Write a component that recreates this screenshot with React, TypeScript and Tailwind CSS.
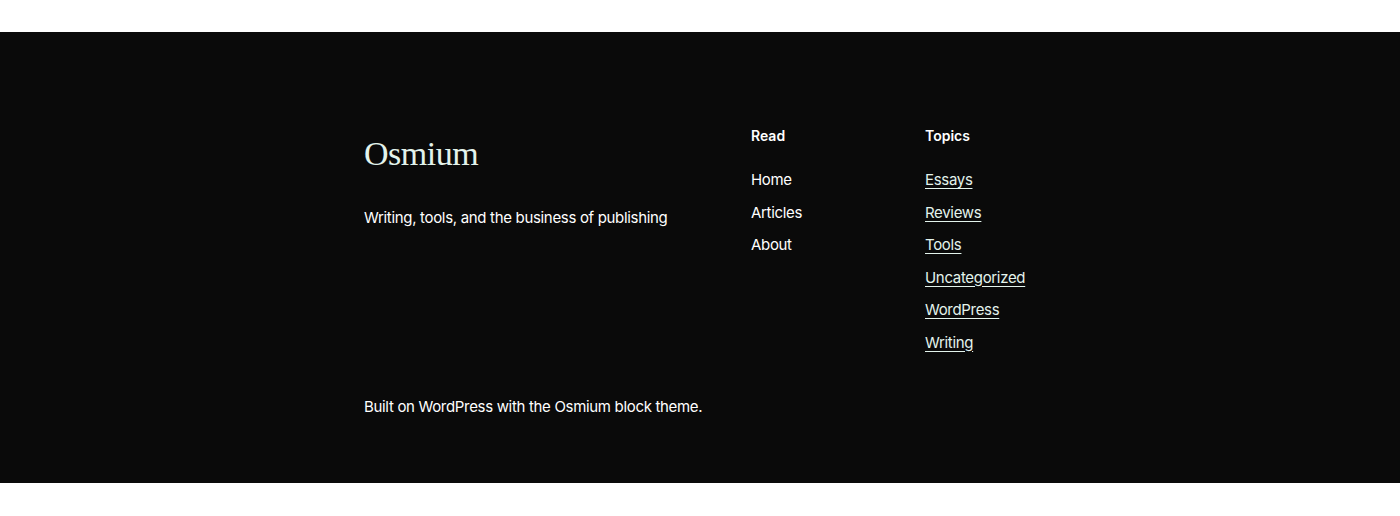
import React from "react";

export default function App() {
  const read = ["Home", "Articles", "About"];
  const topics = ["Essays", "Reviews", "Tools", "Uncategorized", "WordPress", "Writing"];
  return (
    <div className="bg-white pt-[32px] pb-[33px]" style={{ fontFamily: "Inter, 'Noto Sans', sans-serif" }}>
      <footer className="bg-[#0a0a0a] text-white pt-[94px] pb-[64px] tracking-[-0.32px]">
        <div className="w-[672px] mx-auto">
          <div className="flex">
            <div className="w-[387px] pt-[8px]">
              <div className="text-[34px] leading-[40px] text-[#e3f3ec] tracking-[-0.5px]" style={{ fontFamily: "'Liberation Serif', serif" }}>
                Osmium
              </div>
              <p className="mt-[32px] text-[15px] leading-[24px]">Writing, tools, and the business of publishing</p>
            </div>
            <div className="w-[174px]">
              <h3 className="text-[14px] leading-[20px] font-semibold tracking-normal">Read</h3>
              <ul className="mt-[22px] flex flex-col gap-[8.5px]">
                {read.map((r) => (
                  <li key={r} className="text-[15px] leading-[24px]">{r}</li>
                ))}
              </ul>
            </div>
            <div>
              <h3 className="text-[14px] leading-[20px] font-semibold tracking-normal">Topics</h3>
              <ul className="mt-[22px] flex flex-col gap-[8.5px]">
                {topics.map((t) => (
                  <li key={t} className="text-[15px] leading-[24px] text-[#e3f3ec] underline underline-offset-[3px]">{t}</li>
                ))}
              </ul>
            </div>
          </div>
          <p className="mt-[40px] text-[15px] leading-[24px]">Built on WordPress with the Osmium block theme.</p>
        </div>
      </footer>
    </div>
  );
}
